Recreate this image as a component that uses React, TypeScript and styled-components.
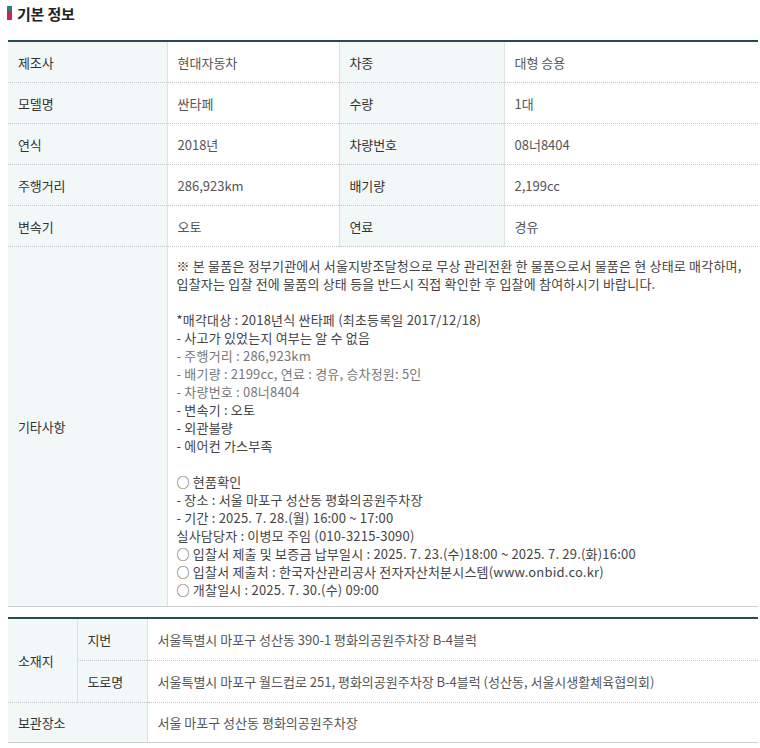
import React from "react";
import styled, { createGlobalStyle } from "styled-components";

const Global = createGlobalStyle`
  html, body { margin: 0; padding: 0; background: #fff; }
  body {
    font-family: "Noto Sans CJK KR", "Noto Sans", "Liberation Sans", sans-serif;
    color: #333;
  }
`;

const Page = styled.div`
  width: 760px;
  padding: 4px 2px 8px 8px;
  box-sizing: border-box;
`;

const TitleRow = styled.h3`
  display: flex;
  align-items: center;
  gap: 5px;
  margin: 0 0 18px -1px;
  height: 18px;
  font-size: 15px;
  font-weight: 700;
  color: #222;
  letter-spacing: -0.2px;
`;

const TitleMark = styled.span`
  display: inline-block;
  width: 5px;
  height: 14px;
  background: linear-gradient(#2b7f7a 0 35%, #c8294a 35% 100%);
`;

const Table = styled.table<{ $gap?: number }>`
  width: 750px;
  border-collapse: collapse;
  table-layout: fixed;
  border-top: 2px solid #264c52;
  border-bottom: 1px solid #cfcfcf;
  margin-bottom: ${(p) => p.$gap ?? 0}px;
  font-size: 13px;
`;

const Th = styled.th<{ $h?: number }>`
  background: #f2f8f8;
  color: #333;
  font-weight: 400;
  text-align: left;
  padding: 0 10px;
  height: ${(p) => p.$h ?? 40}px;
  border-right: 1px solid #dde3e3;
  border-bottom: 1px dotted #c6c6c6;
  vertical-align: middle;
  letter-spacing: -0.1px;
`;

const Td = styled.td<{ $h?: number }>`
  color: #555;
  padding: 0 10px;
  height: ${(p) => p.$h ?? 40}px;
  border-right: 1px solid #dde3e3;
  border-bottom: 1px dotted #c6c6c6;
  vertical-align: middle;
  letter-spacing: 0;
  &:last-child { border-right: none; }
`;

const NoteCell = styled.td`
  color: #444;
  padding: 10px 10px 7px 9px;
  line-height: 18px;
  font-size: 13px;
  border-bottom: 1px solid #cfcfcf;
  letter-spacing: 0.2px;
  vertical-align: top;
`;

const Line = styled.div<{ $muted?: boolean }>`
  height: 18px;
  white-space: nowrap;
  color: ${(p) => (p.$muted ? "#777" : "#444")};
`;

const notes: { t: string; m?: boolean }[] = [
  { t: "※ 본 물품은 정부기관에서 서울지방조달청으로 무상 관리전환 한 물품으로서 물품은 현 상태로 매각하며," },
  { t: "입찰자는 입찰 전에 물품의 상태 등을 반드시 직접 확인한 후 입찰에 참여하시기 바랍니다." },
  { t: "" },
  { t: "*매각대상 : 2018년식 싼타페 (최초등록일 2017/12/18)" },
  { t: "- 사고가 있었는지 여부는 알 수 없음" },
  { t: "- 주행거리 : 286,923km", m: true },
  { t: "- 배기량 : 2199cc, 연료 : 경유, 승차정원: 5인", m: true },
  { t: "- 차량번호 : 08너8404", m: true },
  { t: "- 변속기 : 오토" },
  { t: "- 외관불량" },
  { t: "- 에어컨 가스부족" },
  { t: "" },
  { t: "○ 현품확인" },
  { t: "- 장소 : 서울 마포구 성산동 평화의공원주차장" },
  { t: "- 기간 : 2025. 7. 28.(월) 16:00 ~ 17:00" },
  { t: "실사담당자 : 이병모 주임 (010-3215-3090)" },
  { t: "○ 입찰서 제출 및 보증금 납부일시 : 2025. 7. 23.(수)18:00 ~ 2025. 7. 29.(화)16:00" },
  { t: "○ 입찰서 제출처 : 한국자산관리공사 전자자산처분시스템(www.onbid.co.kr)" },
  { t: "○ 개찰일시 : 2025. 7. 30.(수) 09:00" },
];

const rows: [string, string, string, string][] = [
  ["제조사", "현대자동차", "차종", "대형 승용"],
  ["모델명", "싼타페", "수량", "1대"],
  ["연식", "2018년", "차량번호", "08너8404"],
  ["주행거리", "286,923km", "배기량", "2,199cc"],
  ["변속기", "오토", "연료", "경유"],
];

export default function App() {
  return (
    <Page>
      <Global />
      <TitleRow>
        <TitleMark />
        기본 정보
      </TitleRow>
      <Table $gap={10}>
        <colgroup>
          <col style={{ width: 159 }} />
          <col style={{ width: 172 }} />
          <col style={{ width: 165 }} />
          <col />
        </colgroup>
        <tbody>
          {rows.map((r) => (
            <tr key={r[0]}>
              <Th>{r[0]}</Th>
              <Td>{r[1]}</Td>
              <Th>{r[2]}</Th>
              <Td>{r[3]}</Td>
            </tr>
          ))}
          <tr>
            <Th style={{ borderBottom: "1px solid #cfcfcf" }}>기타사항</Th>
            <NoteCell colSpan={3}>
              {notes.map((n, i) => (
                <Line key={i} $muted={n.m}>
                  {n.t}
                </Line>
              ))}
            </NoteCell>
          </tr>
        </tbody>
      </Table>
      <Table>
        <colgroup>
          <col style={{ width: 69 }} />
          <col style={{ width: 70 }} />
          <col />
        </colgroup>
        <tbody>
          <tr>
            <Th rowSpan={2} $h={82}>소재지</Th>
            <Th $h={41}>지번</Th>
            <Td $h={41}>서울특별시 마포구 성산동 390-1 평화의공원주차장 B-4블럭</Td>
          </tr>
          <tr>
            <Th $h={41}>도로명</Th>
            <Td $h={41}>서울특별시 마포구 월드컵로 251, 평화의공원주차장 B-4블럭 (성산동, 서울시생활체육협의회)</Td>
          </tr>
          <tr>
            <Th colSpan={2} $h={39} style={{ borderBottom: "none" }}>보관장소</Th>
            <Td $h={39} style={{ borderBottom: "none" }}>서울 마포구 성산동 평화의공원주차장</Td>
          </tr>
        </tbody>
      </Table>
    </Page>
  );
}
